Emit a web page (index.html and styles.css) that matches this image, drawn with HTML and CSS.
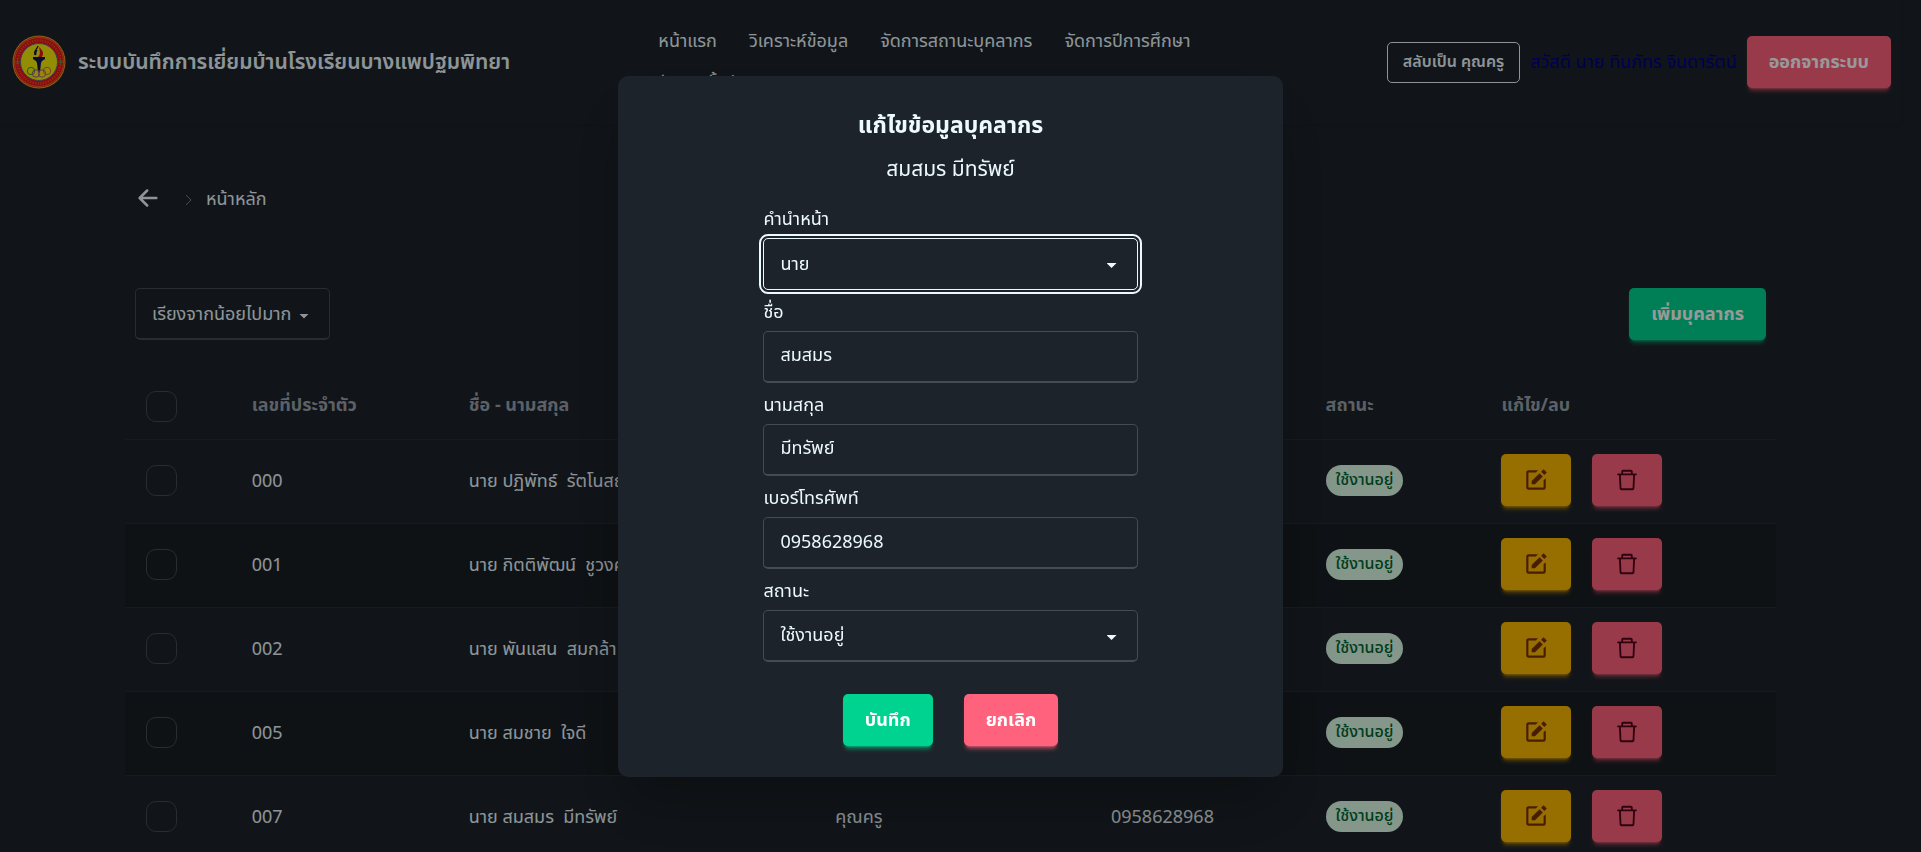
FILE: index.html
```html
<!DOCTYPE html>
<html lang="th">
<head>
<meta charset="utf-8">
<meta name="viewport" content="width=device-width, initial-scale=1">
<title>ระบบบันทึกการเยี่ยมบ้าน</title>
<link rel="stylesheet" href="styles.css">
</head>
<body>
<svg class="sprite" aria-hidden="true">
  <symbol id="icon-edit" viewBox="0 0 24 24"><path d="m18.988 2.012 3 3L19.701 7.3l-3-3zM8 16h3l7.287-7.287-3-3L8 13z"/><path d="M19 19H5V5h6.847l2-2H5c-1.103 0-2 .896-2 2v14c0 1.104.897 2 2 2h14a2 2 0 0 0 2-2v-8.668l-2 2V19z"/></symbol>
  <symbol id="icon-trash" viewBox="0 0 1024 1024"><path d="M360 184h304v72h72v-80c0-35.300-28.700-64-64-64H352c-35.300 0-64 28.700-64 64v80h72v-72zm504 72H160c-17.700 0-32 14.300-32 32v32c0 4.400 3.600 8 8 8h60.400l24.700 523c1.600 34.100 29.800 61 63.900 61h454c34.200 0 62.300-26.800 63.900-61l24.700-523H888c4.400 0 8-3.600 8-8v-32c0-17.700-14.300-32-32-32zM731.300 840H292.700l-24.200-512h487l-24.200 512z"/></symbol>
</svg>

<header class="navbar">
  <div class="brand">
    <svg class="logo" viewBox="0 0 54 54" aria-hidden="true">
      <circle cx="27" cy="27" r="26.500" fill="#e8a01c"/>
      <circle cx="27" cy="27" r="25.500" fill="#e8141c"/>
      <circle cx="27" cy="27" r="24.500" fill="none" stroke="#e87c1c" stroke-width=".8"/>
      <circle cx="27" cy="27" r="21.500" fill="none" stroke="#f0a028" stroke-width="2.400" stroke-dasharray="1 1.600" opacity=".5"/>
      <circle cx="27" cy="27" r="18.500" fill="#f4ec08" stroke="#6a6a90" stroke-width="1"/>
      <path d="M3 27h5M5.500 24.500v5M46 27h5M48.500 24.500v5" stroke="#5c9c30" stroke-width="1"/>
      <path d="M27 12c5 4 5 8 2 11h-4c4-3 3-6 2-11z" fill="#e8141c"/>
      <path d="M26 11c-1 4-5 5-3 9M25 15c-1 2-2 3-1 5" fill="none" stroke="#14184c" stroke-width="1.200"/>
      <path d="M21 22h12v2l-3 2-1 2-1 9h-2l-1-9-1-2-3-2z" fill="#101450"/>
      <g fill="none" stroke-width="1"><circle cx="19" cy="36" r="3.700" stroke="#289c40"/><circle cx="35" cy="36" r="3.700" stroke="#d86c40"/><circle cx="24" cy="38.500" r="3.700" stroke="#9c58a0"/><circle cx="30" cy="38.500" r="3.700" stroke="#b05890"/></g>
    </svg>
    <span class="brand-name">ระบบบันทึกการเยี่ยมบ้านโรงเรียนบางแพปฐมพิทยา</span>
  </div>
  <nav class="menu">
    <a href="#">หน้าแรก</a>
    <a href="#">วิเคราะห์ข้อมูล</a>
    <a href="#">จัดการสถานะบุคลากร</a>
    <a href="#">จัดการปีการศึกษา</a>
    <a href="#">จัดการชั้นปี</a>
  </nav>
  <div class="account">
    <button class="btn-outline" type="button">สลับเป็น คุณครู</button>
    <span class="greeting">สวัสดี นาย ทินภัทร จินดารัตน์</span>
    <button class="btn btn-error" type="button">ออกจากระบบ</button>
  </div>
</header>

<main class="content">
  <nav class="breadcrumbs" aria-label="breadcrumb">
    <a href="#" aria-label="ย้อนกลับ"><svg class="back" viewBox="0 0 24 24" aria-hidden="true"><path d="M11 3 2 12l9 9M3 12H22"/></svg></a>
    <svg class="chevron" viewBox="0 0 8 12" aria-hidden="true"><path d="m1 1 5 5-5 5"/></svg>
    <a href="#">หน้าหลัก</a>
  </nav>

  <div class="toolbar">
    <span class="select-wrap">
      <select class="field sort" aria-label="เรียงลำดับ"><option>เรียงจากน้อยไปมาก</option></select>
    </span>
    <button class="btn btn-success" type="button">เพิ่มบุคลากร</button>
  </div>

  <table class="people">
    <colgroup><col class="c-check"><col class="c-id"><col class="c-name"><col class="c-role"><col class="c-phone"><col class="c-status"><col class="c-action"></colgroup>
    <thead>
      <tr><th><input type="checkbox" class="checkbox" aria-label="เลือกทั้งหมด"></th><th>เลขที่ประจำตัว</th><th>ชื่อ - นามสกุล</th><th>ตำแหน่ง</th><th>เบอร์โทร</th><th>สถานะ</th><th>แก้ไข/ลบ</th></tr>
    </thead>
    <tbody>
      <tr><td><input type="checkbox" class="checkbox" aria-label="เลือก 000"></td><td>000</td><td>นาย ปฏิพัทธ์&nbsp; รัตโนสถ</td><td></td><td></td><td><span class="badge">ใช้งานอยู่</span></td><td><div class="actions"><button class="btn btn-warning" type="button" aria-label="แก้ไข"><svg class="icon"><use href="#icon-edit"/></svg></button><button class="btn btn-error" type="button" aria-label="ลบ"><svg class="icon"><use href="#icon-trash"/></svg></button></div></td></tr>
      <tr><td><input type="checkbox" class="checkbox" aria-label="เลือก 001"></td><td>001</td><td>นาย กิตติพัฒน์&nbsp; ชูวงศ์</td><td></td><td></td><td><span class="badge">ใช้งานอยู่</span></td><td><div class="actions"><button class="btn btn-warning" type="button" aria-label="แก้ไข"><svg class="icon"><use href="#icon-edit"/></svg></button><button class="btn btn-error" type="button" aria-label="ลบ"><svg class="icon"><use href="#icon-trash"/></svg></button></div></td></tr>
      <tr><td><input type="checkbox" class="checkbox" aria-label="เลือก 002"></td><td>002</td><td>นาย พันแสน&nbsp; สมกล้า</td><td></td><td></td><td><span class="badge">ใช้งานอยู่</span></td><td><div class="actions"><button class="btn btn-warning" type="button" aria-label="แก้ไข"><svg class="icon"><use href="#icon-edit"/></svg></button><button class="btn btn-error" type="button" aria-label="ลบ"><svg class="icon"><use href="#icon-trash"/></svg></button></div></td></tr>
      <tr><td><input type="checkbox" class="checkbox" aria-label="เลือก 005"></td><td>005</td><td>นาย สมชาย&nbsp; ใจดี</td><td></td><td></td><td><span class="badge">ใช้งานอยู่</span></td><td><div class="actions"><button class="btn btn-warning" type="button" aria-label="แก้ไข"><svg class="icon"><use href="#icon-edit"/></svg></button><button class="btn btn-error" type="button" aria-label="ลบ"><svg class="icon"><use href="#icon-trash"/></svg></button></div></td></tr>
      <tr><td><input type="checkbox" class="checkbox" aria-label="เลือก 007"></td><td>007</td><td>นาย สมสมร&nbsp; มีทรัพย์</td><td>คุณครู</td><td>0958628968</td><td><span class="badge">ใช้งานอยู่</span></td><td><div class="actions"><button class="btn btn-warning" type="button" aria-label="แก้ไข"><svg class="icon"><use href="#icon-edit"/></svg></button><button class="btn btn-error" type="button" aria-label="ลบ"><svg class="icon"><use href="#icon-trash"/></svg></button></div></td></tr>
    </tbody>
  </table>
</main>

<div class="modal">
  <form class="modal-box" role="dialog" aria-labelledby="modal-title">
    <h2 id="modal-title">แก้ไขข้อมูลบุคลากร</h2>
    <p class="subtitle">สมสมร มีทรัพย์</p>
    <div class="fields">
      <label for="prefix">คำนำหน้า</label>
      <span class="select-wrap"><select id="prefix" class="field focused"><option>นาย</option><option>นาง</option><option>นางสาว</option></select></span>
      <label for="first">ชื่อ</label>
      <input id="first" class="field" type="text" value="สมสมร">
      <label for="last">นามสกุล</label>
      <input id="last" class="field" type="text" value="มีทรัพย์">
      <label for="phone">เบอร์โทรศัพท์</label>
      <input id="phone" class="field" type="tel" value="0958628968">
      <label for="status">สถานะ</label>
      <span class="select-wrap"><select id="status" class="field"><option>ใช้งานอยู่</option></select></span>
    </div>
    <div class="modal-actions">
      <button class="btn btn-success" type="button">บันทึก</button>
      <button class="btn btn-error" type="button">ยกเลิก</button>
    </div>
  </form>
</div>
</body>
</html>
```
FILE: styles.css
```css
:root {
  --base: #1d232a;
  --base-alt: #191e24;
  --text: #ecf9ff;
  --line: #434b53;
  --gutter: 20px;
}
* { box-sizing: border-box; }
html, body { height: 100%; }
body {
  margin: 0;
  padding-right: var(--gutter);
  overflow: hidden;
  background: var(--base);
  color: var(--text);
  font-family: "Noto Sans", "Noto Sans Thai", sans-serif;
  font-size: 18px;
  line-height: 28px;
}
a { color: inherit; text-decoration: none; }
button, input, select { font: inherit; color: inherit; }
.sprite { display: none; }

.navbar {
  display: grid;
  grid-template-columns: 1fr 1fr 1fr;
  align-items: center;
  min-height: 124px;
  padding: 0 10px 0 12px;
  box-shadow: 0 1px 3px rgba(0, 0, 0, .1);
}
.brand { display: flex; align-items: center; gap: 12px; white-space: nowrap; }
.logo { width: 54px; height: 54px; }
.brand-name { padding-bottom: 2px; font-size: 21px; font-weight: 600; }
.menu { display: flex; flex-wrap: wrap; padding-left: 4px; }
.menu a { padding: 6px 16px 8px; }
.account { display: flex; align-items: center; justify-content: flex-end; gap: 10px; white-space: nowrap; }
.greeting { padding-bottom: 3px; color: #00008b; }

.btn {
  height: 52px;
  padding: 0 22px 2px;
  border: 0;
  border-radius: 5px;
  font-weight: 700;
}
.btn-outline {
  height: 41px;
  padding: 0 15px 2px;
  border: 1px solid var(--text);
  border-radius: 5px;
  background: none;
  font-size: 16px;
  font-weight: 600;
}
.btn-success { background: #00d390; color: #fff; box-shadow: 0 3px 2px -2px #00d39080, 0 5px 4px -2px #00d39080; }
.btn-error { background: #ff627d; color: #fff; box-shadow: 0 3px 2px -2px #ff627d80, 0 5px 4px -2px #ff627d80; }
.btn-warning { background: #fcb700; box-shadow: 0 3px 2px -2px #fcb70080, 0 5px 4px -2px #fcb70080; }

.content { padding: 0 125px; }
.breadcrumbs { display: flex; align-items: center; height: 148px; padding: 0 10px 0 13px; }
.breadcrumbs a { display: flex; }
.back { width: 20px; height: 20px; fill: none; stroke: currentColor; stroke-width: 3; stroke-linecap: round; stroke-linejoin: round; }
.chevron { width: 8px; height: 12px; margin: 4px 13px 0 27px; fill: none; stroke: #7b8086; stroke-width: 1; }
.toolbar { display: flex; align-items: center; justify-content: space-between; margin-top: 16px; padding: 0 10px; }

.field {
  display: block;
  width: 100%;
  height: 52px;
  padding: 0 16px 2px;
  appearance: none;
  border: 1px solid var(--line);
  border-bottom-width: 2px;
  border-radius: 5px;
  background: var(--base);
  outline: 0;
}
.select-wrap { display: grid; align-items: center; }
.select-wrap > *, .select-wrap::after { grid-area: 1 / 1; }
.select-wrap::after {
  content: "";
  width: 10px;
  height: 5px;
  margin: 4px 21px 0 0;
  justify-self: end;
  background: var(--text);
  clip-path: polygon(0 0, 100% 0, 50% 100%);
  pointer-events: none;
}
.sort { padding-right: 37px; }
.focused { border: 1px solid var(--text); outline: 2px solid var(--text); outline-offset: 2px; }

.people { width: 100%; margin-top: 31px; border-collapse: collapse; table-layout: fixed; }
.c-check { width: 6.4%; }
.c-id { width: 13.15%; }
.c-name { width: 22.2%; }
.c-role { width: 16.7%; }
.c-phone { width: 13%; }
.c-status { width: 10.65%; }
.people th, .people td { padding: 0 21px 2px; text-align: left; white-space: nowrap; }
.people th { height: 68px; color: #98a2aa; font-weight: 700; }
.people td { height: 84px; }
.people tr { border-bottom: 1px solid #272d34; }
.people tbody tr:nth-child(even) { background: var(--base-alt); }
.checkbox {
  display: block;
  width: 31px;
  height: 31px;
  margin: 0;
  appearance: none;
  border: 1px solid var(--line);
  border-radius: 10px;
}
.people th .checkbox { margin-top: 5px; }
.badge {
  display: inline-flex;
  align-items: center;
  height: 31px;
  padding: 0 10px 2px;
  border-radius: 16px;
  background: #dcfce7;
  color: #016630;
  font-size: 16px;
  font-weight: 500;
}
.actions { display: flex; gap: 21px; }
.actions .btn { display: flex; align-items: center; padding-bottom: 0; }
.icon { width: 26px; height: 26px; fill: currentColor; }
.actions .btn-warning { color: #793205; }
.actions .btn-error { color: #4d0218; }

.modal {
  position: fixed;
  inset: 0;
  display: grid;
  place-items: center;
  padding-right: var(--gutter);
  background: rgba(0, 0, 0, .4);
}
.modal-box {
  display: flex;
  flex-direction: column;
  align-items: center;
  width: 35%;
  padding: 31px;
  border-radius: 10px;
  background: var(--base);
  box-shadow: 0 32px 64px rgba(0, 0, 0, .25);
}
.modal-box h2 { margin: 0; font-size: 23px; line-height: 34px; font-weight: 700; }
.subtitle { margin: 10px 0 12px; font-size: 21px; line-height: 34px; }
.fields { display: grid; width: 62%; }
.fields label { padding: 4px 0 3px; line-height: 34px; }
.modal-actions { display: flex; gap: 31px; margin-top: 32px; }
```
